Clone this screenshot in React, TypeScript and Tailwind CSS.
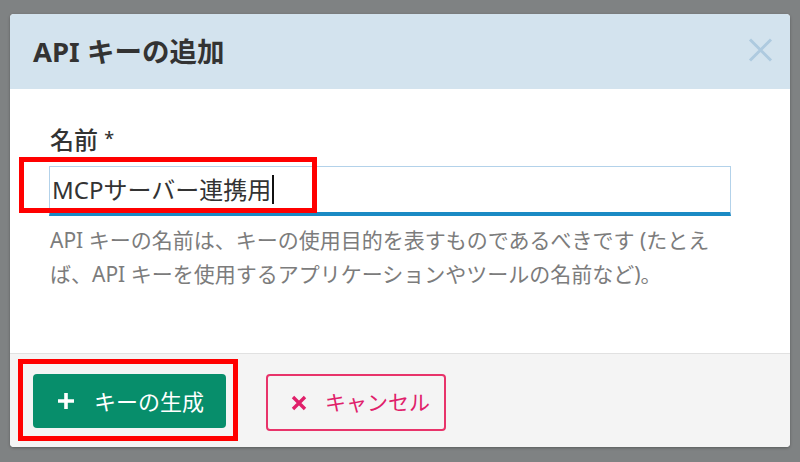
import React from "react";

const font = { fontFamily: '"Noto Sans", "Noto Sans CJK JP", sans-serif' };

export default function App() {
  return (
    <div className="w-[800px] h-[462px] bg-[#7f8283] pt-[14px] pl-[10px] overflow-hidden" style={font}>
      <div className="w-[780px] h-[433px] flex flex-col rounded-[4px] overflow-hidden bg-white shadow-[0_1px_3px_rgba(0,0,0,0.3)]">
        {/* header */}
        <div className="h-[75px] shrink-0 bg-[#d3e3ee] flex items-center justify-between pl-[23px] pr-[17px]">
          <h1 className="text-[27.5px] font-bold text-[#333333] leading-none">API キーの追加</h1>
          <svg width="25" height="24" viewBox="0 0 25 24" className="mt-[-3px]">
            <path d="M2 1.5 L23 22.5 M23 1.5 L2 22.5" stroke="#aecadf" strokeWidth="3" strokeLinecap="butt" />
          </svg>
        </div>
        {/* body */}
        <div className="h-[264px] shrink-0 bg-white pt-[33px] pl-[39px]">
          <div className="text-[24px] leading-[36px] font-medium text-[#333333] pl-[1px]">
            名前 <span className="text-[18px] align-top relative top-[-2px]">*</span>
          </div>
          <div className="relative mt-[8px] w-[682px] h-[50px] border border-[#b3d2ea] border-b-[4px] border-b-[#1a8ac4] flex items-center pl-[2px]">
            <span className="text-[24px] text-[#333333] leading-none">MCPサーバー連携用</span>
            <span className="w-[1.5px] h-[29px] bg-[#111111] ml-[1px]" />
            <span className="absolute left-[-31px] top-[-10px] w-[298px] h-[56px] border-[5px] border-[#ff0000]" />
          </div>
          <p className="mt-[7px] text-[21px] leading-[34px] text-[#7c7c7c] pl-[1px]">
            <span className="block whitespace-nowrap">API キーの名前は、キーの使用目的を表すものであるべきです (たとえ</span>
            <span className="block whitespace-nowrap">ば、API キーを使用するアプリケーションやツールの名前など)。</span>
          </p>
        </div>
        {/* footer */}
        <div className="flex-1 bg-[#f4f4f4] border-t border-[#e1e1e1] pt-[20px] pl-[23px] flex items-start gap-[40px]">
          <div className="relative">
            <button className="h-[54px] w-[193px] rounded-[4px] bg-[#078e6b] text-white flex items-center pl-[24px]">
              <svg width="18" height="18" viewBox="0 0 18 18">
                <path d="M9 1 V17 M1 9 H17" stroke="#ffffff" strokeWidth="3.6" />
              </svg>
              <span className="ml-[19px] text-[22px] leading-none">キーの生成</span>
            </button>
            <span className="absolute left-[-15px] top-[-15px] w-[220px] h-[82px] border-[5px] border-[#ff0000]" />
          </div>
          <button className="h-[57px] w-[180px] rounded-[4px] border-2 border-[#e8336a] flex items-center pl-[23px]">
            <svg width="16" height="16" viewBox="0 0 16 16">
              <path d="M2 2 L14 14 M14 2 L2 14" stroke="#e0206a" strokeWidth="3.4" />
            </svg>
            <span className="ml-[18px] text-[21px] leading-none text-[#e0206a]">キャンセル</span>
          </button>
        </div>
      </div>
    </div>
  );
}
